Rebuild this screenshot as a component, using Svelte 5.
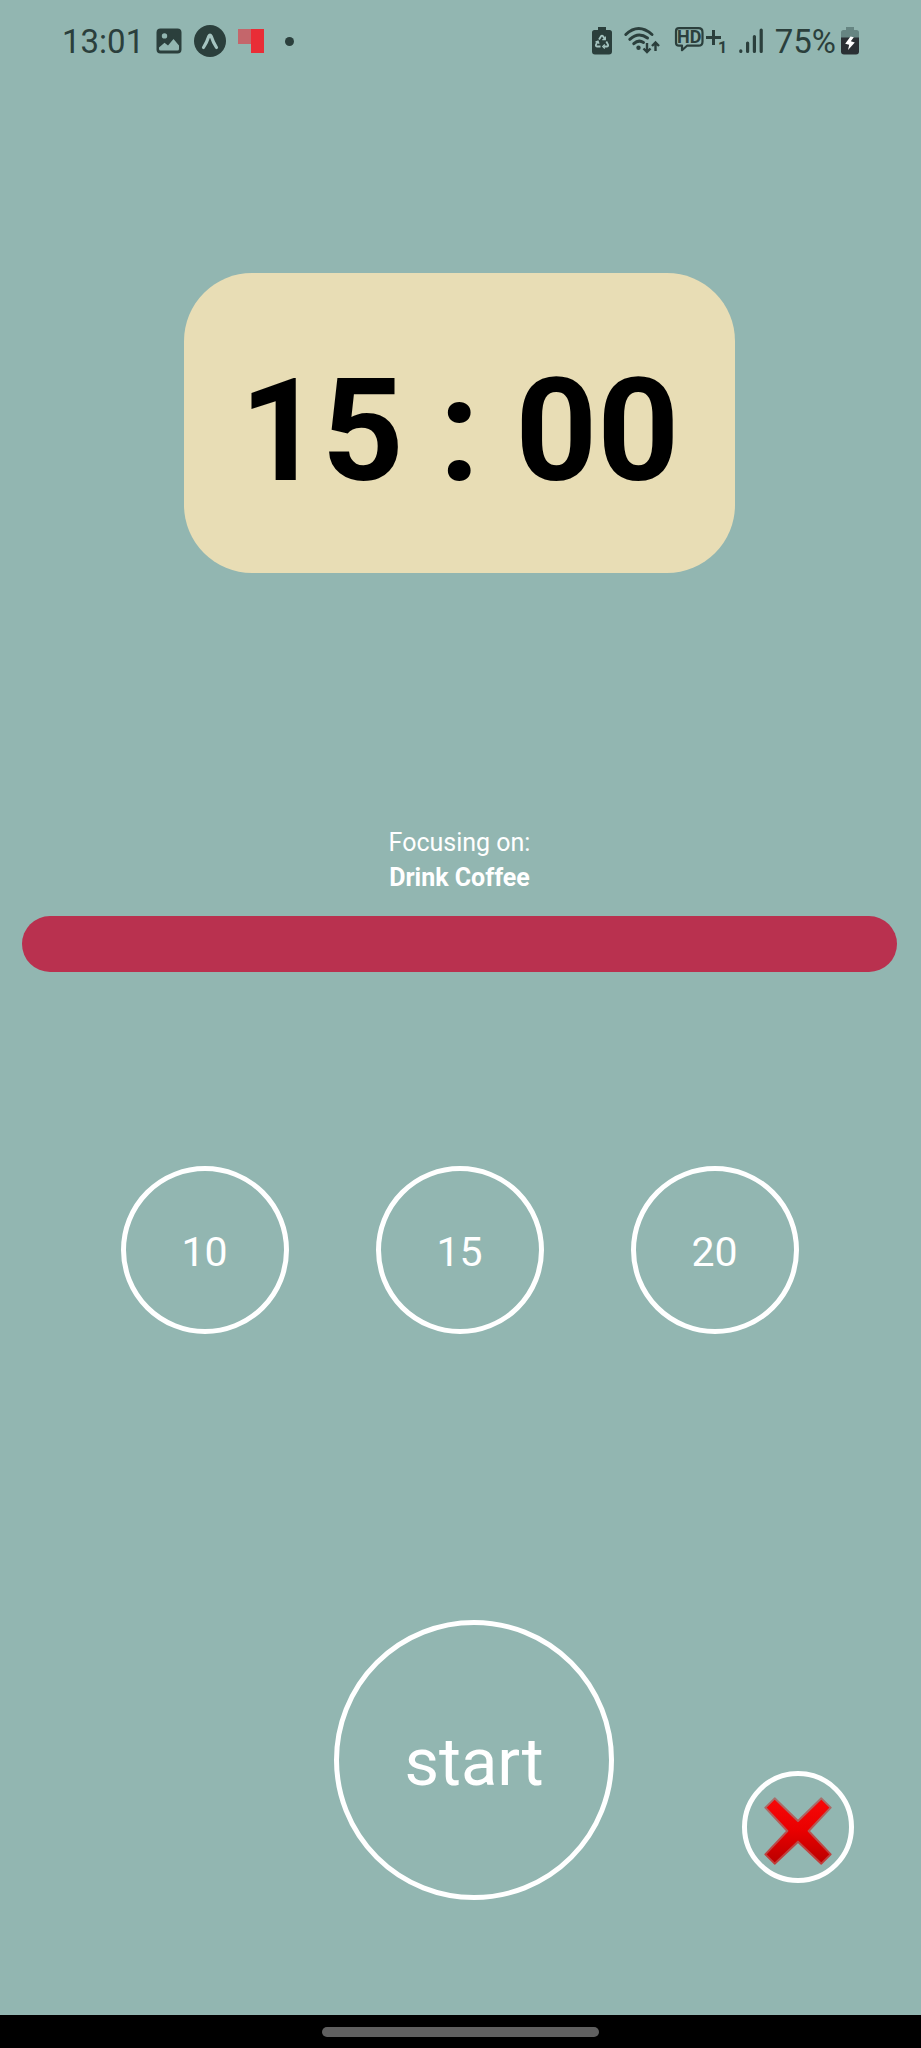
<script>
  const presets = [10, 15, 20];
  const task = 'Drink Coffee';
  let minutes = $state(15);
  let running = $state(false);
</script>

<div class="screen">
  <header class="status">
    <div class="side left">
      <span class="clock">13:01</span>
      <svg class="picture" width="26" height="26" viewBox="0 0 26 26" aria-hidden="true">
        <path fill="#2b3f3c" fill-rule="evenodd" d="M4.500 .5h17a4 4 0 0 1 4 4v17a4 4 0 0 1-4 4h-17a4 4 0 0 1-4-4v-17a4 4 0 0 1 4-4zM8.500 5.200a2.700 2.700 0 1 0 0 5.400a2.700 2.700 0 0 0 0-5.400zM3 19.500v1.500q0 1.500 1.500 1.500h17q1.500 0 1.500-1.500v-3.500l-5.500-6.500l-5.500 6.500l-3.500-2.800z" />
      </svg>
      <svg class="expo" width="32" height="32" viewBox="0 0 32 32" aria-hidden="true">
        <circle cx="16" cy="16" r="16" fill="#2b3f3c" />
        <path d="M9.500 22.500Q13 17 14.800 11.200Q16 9 17.200 11.200Q19 17 22.500 22.500" fill="none" stroke="#a5c4c0" stroke-width="3.200" stroke-linecap="round" stroke-linejoin="round" />
      </svg>
      <svg class="flag" width="26" height="24" viewBox="0 0 26 24" aria-hidden="true">
        <rect width="13" height="15" fill="#c4666b" />
        <rect x="13" width="13" height="24" fill="#e92d36" />
      </svg>
      <span class="dot"></span>
    </div>
    <div class="side right">
      <svg width="20" height="28" viewBox="0 0 20 28" aria-hidden="true">
        <path fill="#2b3f3c" d="M6 0h8v3h3.500a2.500 2.500 0 0 1 2.500 2.500v19a3 3 0 0 1-3 3h-14a3 3 0 0 1-3-3v-19a2.500 2.500 0 0 1 2.500-2.500h3.500z" />
        <g fill="none" stroke="#a5c4c0" stroke-width="1.800">
          <path d="M7 12.500L9 9.200q1-1.200 2 0l2 3.300M14.300 14.500l1.700 3q.6 1.800-1.300 2h-3.200M8.500 19.500h-3.200q-1.900-.2-1.300-2l1.700-3" />
          <path d="M13.300 9.500v3.200h-3M12.800 17.500l-2 2l2 2M3.500 15.200l2.500-1l1 2.600" stroke-width="1.300" />
        </g>
      </svg>
      <svg class="wifi" width="36" height="28" viewBox="0 0 36 28" aria-hidden="true">
        <g fill="none" stroke="#2b3f3c" stroke-width="3" stroke-linecap="round">
          <path d="M1.800 7.500Q14.500-4.500 28 7.500" />
          <path d="M5.800 12.300Q14.500 4.300 23.500 11" />
          <path d="M9.800 16.700Q14.500 12.300 19.500 15.500" />
        </g>
        <circle cx="14.500" cy="20.800" r="2.200" fill="#2b3f3c" />
        <g fill="none" stroke="#2b3f3c" stroke-width="2.400">
          <path d="M23 16v9M19.500 21.500l3.500 3.600l3.500-3.600" />
          <path d="M31.500 24v-8.500M28 19l3.500-3.600l3.500 3.600" />
        </g>
      </svg>
      <svg class="hd" width="52" height="28" viewBox="0 0 52 28" aria-hidden="true">
        <path d="M4 1.200h19.500q4 0 4 4v9.500q0 4-4 4h-11.500l-5 4.500v-4.500h-3q-3 0-3-3v-11.500q0-3 3-3z" fill="none" stroke="#2b3f3c" stroke-width="2.200" stroke-linejoin="round" />
        <text x="2" y="16" font-size="18" font-weight="700">HD</text>
        <path d="M38.500 3v15M31 10.500h15" stroke="#2b3f3c" stroke-width="3" />
        <text x="43" y="26" font-size="16" font-weight="700">1</text>
      </svg>
      <svg class="signal" width="24" height="26" viewBox="0 0 24 26" aria-hidden="true">
        <g stroke="#2b3f3c" stroke-width="3.200" stroke-linecap="round">
          <path d="M1.800 22.800v.7M8.600 15v8.500M15.400 8.500v15M22.200 2v21.500" />
        </g>
      </svg>
      <span class="percent">75%</span>
      <svg class="charge" width="18" height="28" viewBox="0 0 18 28" aria-hidden="true">
        <path fill="#668582" d="M5 0h8v3h2.500a2.500 2.500 0 0 1 2.500 2.500v5.500h-18v-5.500a2.500 2.500 0 0 1 2.500-2.500h2.500z" />
        <path fill="#2b3034" d="M0 10.500h18v14a3 3 0 0 1-3 3h-12a3 3 0 0 1-3-3z" />
        <path fill="#fff" d="M9.500 9.500l-5.300 7.200l4 1l-1.200 5.300l6.800-7.500l-4-1.200l3-4z" />
      </svg>
    </div>
  </header>

  <main>
    <div class="timer" role="timer">{minutes} : 00</div>

    <section class="focus">
      <p>Focusing on:</p>
      <p class="task">{task}</p>
      <div class="bar" role="progressbar" aria-label="Time left" aria-valuemin="0" aria-valuemax="100" aria-valuenow="100"></div>
    </section>

    <div class="presets">
      {#each presets as preset}
        <button class="round preset" type="button" onclick={() => (minutes = preset)}>{preset}</button>
      {/each}
    </div>

    <div class="actions">
      <button class="round start" type="button" onclick={() => (running = !running)}>{running ? 'pause' : 'start'}</button>
      <button class="round clear" type="button" aria-label="Clear task">
        <svg width="68" height="68" viewBox="-2 -2 204 204" aria-hidden="true">
          <defs>
            <linearGradient id="cross" x1="0" y1="0" x2="0" y2="1">
              <stop offset="0" stop-color="#f80808" />
              <stop offset="0.500" stop-color="#e90000" />
              <stop offset="1" stop-color="#b90000" />
            </linearGradient>
            <linearGradient id="edge" x1="0" y1="0" x2="0" y2="1">
              <stop offset="0" stop-color="#a86f6c" />
              <stop offset="1" stop-color="#c23a38" />
            </linearGradient>
          </defs>
          <path d="M2 30L30 2L100 70L170 2L198 30L132 100L198 170L170 198L100 132L30 198L2 170L68 100Z" fill="url(#cross)" stroke="url(#edge)" stroke-width="6" stroke-linejoin="round" />
        </svg>
      </button>
    </div>
  </main>

  <footer class="nav"><span class="handle"></span></footer>
</div>

<style>
  :global(body) {
    margin: 0;
    background: #92b6b1;
  }

  .screen {
    display: flex;
    flex-direction: column;
    min-height: 100vh;
    font-family: Roboto, 'Noto Sans', sans-serif;
    color: #fff;
    background: #92b6b1;
  }

  .status {
    display: flex;
    justify-content: space-between;
    align-items: center;
    height: 82px;
    padding: 0 62px;
    color: #2b3f3c;
    font-size: 33px;
    line-height: 40px;
  }

  .side {
    display: flex;
    align-items: center;
    gap: 12px;
  }

  .status svg {
    flex: none;
    overflow: visible;
  }

  .status text {
    fill: #2b3f3c;
    font-family: Roboto, sans-serif;
  }

  .clock,
  .percent {
    padding-top: 2px;
  }

  .dot {
    width: 9px;
    height: 9px;
    margin-left: 9px;
    border-radius: 50%;
    background: #2b3f3c;
  }

  .hd {
    margin-left: 3px;
  }

  .percent {
    margin-right: -7px;
  }

  main {
    flex: 1;
    display: flex;
    flex-direction: column;
    padding: 191px 24px 115px 22px;
  }

  .timer {
    align-self: center;
    padding: 62px 56px 46px;
    border-radius: 68px;
    background: #e8ddb5;
    color: #000;
    font-size: 143px;
    font-weight: 700;
    line-height: 192px;
    white-space: nowrap;
  }

  .focus {
    margin-top: 252px;
    text-align: center;
    font-size: 25px;
    line-height: 35px;
  }

  .focus p {
    margin: 0;
  }

  .focus .task {
    font-weight: 700;
  }

  .bar {
    height: 56px;
    margin-top: 21px;
    border-radius: 28px;
    background: #b9314f;
  }

  .presets {
    display: flex;
    justify-content: center;
    gap: 87px;
    margin-top: 194px;
  }

  .round {
    display: flex;
    flex: none;
    align-items: center;
    justify-content: center;
    box-sizing: border-box;
    padding: 4px 0 0;
    border: 5px solid #fff;
    border-radius: 50%;
    background: none;
    color: inherit;
    font-family: inherit;
    cursor: pointer;
  }

  .preset {
    width: 168px;
    height: 168px;
    font-size: 41px;
  }

  .actions {
    display: flex;
    justify-content: flex-end;
    align-items: flex-end;
    gap: 128px;
    margin-top: auto;
    padding: 194px 43px 0 0;
  }

  .start {
    width: 280px;
    height: 280px;
    font-size: 67px;
  }

  .clear {
    width: 112px;
    height: 112px;
    padding: 8px 0 0;
    margin-bottom: 17px;
  }

  .nav {
    display: flex;
    justify-content: center;
    align-items: center;
    height: 33px;
    background: #000;
  }

  .handle {
    width: 30%;
    height: 10px;
    border-radius: 5px;
    background: #606060;
  }
</style>
